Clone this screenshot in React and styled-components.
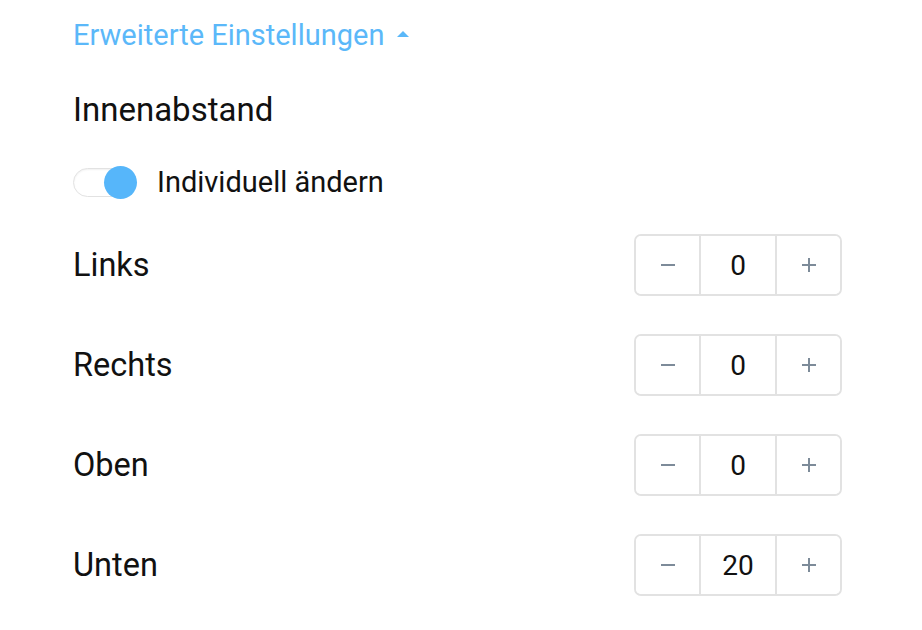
import React, { useState } from "react";
import styled, { createGlobalStyle } from "styled-components";

const Global = createGlobalStyle`
  body {
    margin: 0;
    background: #fff;
    font-family: Roboto, "Liberation Sans", sans-serif;
    color: #111;
  }
`;

const Page = styled.div`
  width: 769px;
  padding: 16px 0 0 73px;
  display: flex;
  flex-direction: column;
`;

const Toggle = styled.button`
  display: inline-flex;
  align-items: center;
  gap: 10px;
  padding: 0;
  border: 0;
  background: none;
  color: #5bb8f9;
  font-family: inherit;
  font-size: 29px;
  line-height: 38px;
  cursor: pointer;
  align-self: flex-start;
`;

const Caret = styled.span`
  width: 0;
  height: 0;
  border-left: 6px solid transparent;
  border-right: 6px solid transparent;
  border-bottom: 6px solid #5bb8f9;
  margin-left: 3px;
  margin-bottom: 2px;
`;

const Heading = styled.h3`
  margin: 37px 0 0;
  font-size: 33px;
  font-weight: 400;
  line-height: 38px;
`;

const SwitchRow = styled.label`
  margin-top: 37px;
  display: flex;
  align-items: center;
  gap: 20px;
  font-size: 29px;
  line-height: 32px;
  height: 32px;
`;

const Track = styled.span`
  position: relative;
  width: 64px;
  height: 32px;
  display: inline-block;
  &::before {
    content: "";
    position: absolute;
    left: 0;
    top: 2px;
    width: 60px;
    height: 29px;
    border-radius: 15px;
    border: 1px solid #e2e2e2;
    box-sizing: border-box;
    background: #fff;
    box-shadow: inset 0 1px 2px rgba(0, 0, 0, 0.06);
  }
`;

const Knob = styled.span`
  position: absolute;
  top: 0;
  left: ${(p) => (p.$on ? "31px" : "0")};
  width: 33px;
  height: 33px;
  border-radius: 50%;
  background: #56b6fa;
`;

const Rows = styled.div`
  margin-top: 36px;
  display: flex;
  flex-direction: column;
  gap: 38px;
`;

const Row = styled.div`
  display: flex;
  align-items: center;
  justify-content: space-between;
  height: 62px;
`;

const Label = styled.span`
  font-size: 32.5px;
  line-height: 38px;
`;

const Stepper = styled.div`
  display: grid;
  grid-template-columns: 63px 78px 63px;
  height: 62px;
  box-sizing: border-box;
  border: 2px solid #e2e2e2;
  border-radius: 7px;
  overflow: hidden;
`;

const StepButton = styled.button`
  border: 0;
  background: #fff;
  color: #7d8b99;
  font-family: inherit;
  padding: 0;
  display: flex;
  align-items: center;
  justify-content: center;
  cursor: pointer;
`;

const Value = styled.div`
  border-left: 2px solid #e2e2e2;
  border-right: 2px solid #e2e2e2;
  display: flex;
  align-items: center;
  justify-content: center;
  font-size: 28px;
`;

function NumberStepper({ value, onChange }) {
  return (
    <Stepper>
      <StepButton onClick={() => onChange(value - 1)}>
        <svg width="16" height="16" viewBox="0 0 16 16">
          <path d="M1 8h14" stroke="currentColor" strokeWidth="2" />
        </svg>
      </StepButton>
      <Value>{value}</Value>
      <StepButton onClick={() => onChange(value + 1)}>
        <svg width="16" height="16" viewBox="0 0 16 16">
          <path d="M1 8h14M8 1v14" stroke="currentColor" strokeWidth="2" />
        </svg>
      </StepButton>
    </Stepper>
  );
}

export default function App() {
  const [on, setOn] = useState(true);
  const [pad, setPad] = useState({ Links: 0, Rechts: 0, Oben: 0, Unten: 20 });

  return (
    <>
      <Global />
      <Page>
        <Toggle>
          Erweiterte Einstellungen <Caret />
        </Toggle>
        <Heading>Innenabstand</Heading>
        <SwitchRow onClick={() => setOn(!on)}>
          <Track>
            <Knob $on={on} />
          </Track>
          Individuell ändern
        </SwitchRow>
        <Rows>
          {Object.keys(pad).map((k) => (
            <Row key={k}>
              <Label>{k}</Label>
              <NumberStepper
                value={pad[k]}
                onChange={(v) => setPad({ ...pad, [k]: v })}
              />
            </Row>
          ))}
        </Rows>
      </Page>
    </>
  );
}
